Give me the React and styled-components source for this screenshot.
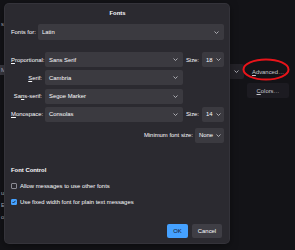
import { Fragment } from "react";
import styled, { createGlobalStyle } from "styled-components";

const GlobalStyle = createGlobalStyle`
  html, body {
    margin: 0;
    padding: 0;
    background: #131317;
  }
  body {
    font-family: "Liberation Sans", Arial, sans-serif;
    font-size: 5.9px;
    color: #fbfbfe;
  }
`;

const Page = styled.div`
  position: relative;
  display: flex;
  width: 295px;
  height: 250px;
  overflow: hidden;
  background: #131317;
`;

const Sidebar = styled.div`
  width: 5px;
  flex: none;
  overflow: hidden;
  display: flex;
  flex-direction: column;
  color: #b8b8c0;
  white-space: nowrap;
`;

const SideItem = styled.div`
  height: 10px;
  line-height: 10px;
  margin-top: ${(props) => props.top}px;
  background: ${(props) => (props.selected ? "#3a3940" : "transparent")};
  padding-left: 1px;
`;

const Main = styled.div`
  flex: 1;
  display: flex;
  justify-content: flex-end;
  align-items: flex-start;
  gap: 3px;
  padding: 64px 6px 0 0;
`;

const BackSelect = styled.div`
  width: 90px;
  height: 15px;
  border-radius: 2px;
  background: #232228;
  display: flex;
  align-items: center;
  justify-content: flex-end;
  padding-right: 5px;
  box-sizing: border-box;
`;

const ButtonCol = styled.div`
  display: flex;
  flex-direction: column;
  gap: 4px;
`;

const BackButton = styled.div`
  width: 42px;
  height: 15px;
  border-radius: 2px;
  background: ${(props) => (props.plain ? "transparent" : "#1c1b21")};
  color: #c9c9d0;
  display: flex;
  align-items: center;
  justify-content: center;
`;

const Ring = styled.svg`
  position: absolute;
  left: 242px;
  top: 58px;
`;

const Dialog = styled.div`
  position: absolute;
  left: 5px;
  top: 4px;
  width: 224px;
  height: 239px;
  box-sizing: border-box;
  padding: 0 5px 5px 6px;
  background: #2b2a30;
  border-radius: 4px;
  box-shadow: 0 0 0 1px #34333a, 0 2px 8px rgba(0, 0, 0, 0.5);
  display: flex;
  flex-direction: column;
`;

const Title = styled.div`
  height: 18px;
  line-height: 18px;
  text-align: center;
  font-weight: bold;
`;

const FontsForRow = styled.div`
  display: flex;
  align-items: center;
  gap: 2px;
  margin-top: 2px;
`;

const Label = styled.span`
  white-space: nowrap;
  text-align: ${(props) => (props.right ? "right" : "left")};
`;

const Select = styled.div`
  flex: ${(props) => (props.grow ? 1 : "none")};
  width: ${(props) => (props.w ? `${props.w}px` : "auto")};
  height: ${(props) => props.h || 15}px;
  border-radius: 2px;
  background: #3b3a40;
  display: flex;
  align-items: center;
  justify-content: space-between;
  padding: 0 ${(props) => (props.small ? 3 : 5)}px 0 4px;
  box-sizing: border-box;
  white-space: nowrap;
  grid-column: ${(props) => props.col || "auto"};
`;

const FontGrid = styled.div`
  display: grid;
  grid-template-columns: 31px 1fr auto 22px;
  grid-auto-rows: 15px;
  column-gap: 3px;
  row-gap: 3.3px;
  align-items: center;
  margin-top: 12px;
`;

const MinRow = styled.div`
  display: flex;
  justify-content: flex-end;
  align-items: center;
  gap: 2px;
  margin-top: 6px;
`;

const Heading = styled.div`
  margin-top: 23px;
  height: 8px;
  line-height: 8px;
  font-weight: bold;
`;

const CheckRow = styled.div`
  display: flex;
  align-items: center;
  gap: 3px;
  height: 8px;
  margin-top: 8px;
`;

const Box = styled.div`
  width: 6px;
  height: 6px;
  box-sizing: border-box;
  border-radius: 1px;
  border: 1px solid ${(props) => (props.checked ? "#45a1ff" : "#8a8a93")};
  background: ${(props) => (props.checked ? "#45a1ff" : "#2b2a30")};
  display: flex;
  align-items: center;
  justify-content: center;
`;

const Footer = styled.div`
  margin-top: auto;
  display: flex;
  justify-content: flex-end;
  gap: 4px;
  padding-right: 2px;
`;

const Button = styled.div`
  width: ${(props) => props.w}px;
  height: 14px;
  border-radius: 2px;
  display: flex;
  align-items: center;
  justify-content: center;
  background: ${(props) => (props.primary ? "#45a1ff" : "#3f3e45")};
  color: ${(props) => (props.primary ? "#15141a" : "#fbfbfe")};
`;

const U = styled.u`
  text-decoration-thickness: 0.5px;
  text-underline-offset: 1px;
`;

const Chevron = () => (
  <svg width="5" height="3" viewBox="0 0 5 3">
    <polyline points="0.5,0.5 2.5,2.5 4.5,0.5" fill="none" stroke="#c8c8ce" strokeWidth="0.8" />
  </svg>
);

const Check = () => (
  <svg width="4" height="4" viewBox="0 0 4 4">
    <polyline points="0.5,2 1.5,3 3.5,0.8" fill="none" stroke="#15141a" strokeWidth="0.8" />
  </svg>
);

const fontRows = [
  { key: "P", rest: "roportional:", value: "Sans Serif", size: "18" },
  { key: "S", rest: "erif:", value: "Cambria" },
  { pre: "Sa", key: "n", rest: "s-serif:", value: "Segoe Marker" },
  { key: "M", rest: "onospace:", value: "Consolas", size: "14" },
];

const App = () => (
  <>
    <GlobalStyle />
    <Page>
      <Sidebar>
        <SideItem top={19}>s</SideItem>
        <SideItem top={36} selected>M</SideItem>
        <SideItem top={113}>u</SideItem>
        <SideItem top={2}>E</SideItem>
        <SideItem top={2}>o</SideItem>
      </Sidebar>
      <Main>
        <BackSelect>
          <Chevron />
        </BackSelect>
        <ButtonCol>
          <BackButton plain>
            <span>
              <U>A</U>dvanced…
            </span>
          </BackButton>
          <BackButton>
            <span>
              <U>C</U>olors…
            </span>
          </BackButton>
        </ButtonCol>
      </Main>
      <Ring width="50" height="24" viewBox="0 0 50 24">
        <ellipse cx="24" cy="11.5" rx="22.5" ry="10" fill="none" stroke="#e8141a" strokeWidth="2" />
      </Ring>
      <Dialog>
        <Title>Fonts</Title>
        <FontsForRow>
          <Label>Fonts for:</Label>
          <Select grow h={16}>
            <span>Latin</span>
            <Chevron />
          </Select>
        </FontsForRow>
        <FontGrid>
          {fontRows.map((row) => (
            <Fragment key={row.value}>
              <Label right>
                {row.pre}
                <U>{row.key}</U>
                {row.rest}
              </Label>
              <Select col="2">
                <span>{row.value}</span>
                <Chevron />
              </Select>
              {row.size ? (
                <>
                  <Label>Size:</Label>
                  <Select small>
                    <span>{row.size}</span>
                    <Chevron />
                  </Select>
                </>
              ) : (
                <>
                  <span />
                  <span />
                </>
              )}
            </Fragment>
          ))}
        </FontGrid>
        <MinRow>
          <Label>Minimum font size:</Label>
          <Select small w={29}>
            <span>None</span>
            <Chevron />
          </Select>
        </MinRow>
        <Heading>Font Control</Heading>
        <CheckRow>
          <Box />
          <Label>Allow messages to use other fonts</Label>
        </CheckRow>
        <CheckRow>
          <Box checked>
            <Check />
          </Box>
          <Label>Use fixed width font for plain text messages</Label>
        </CheckRow>
        <Footer>
          <Button primary w={21}>OK</Button>
          <Button w={30}>Cancel</Button>
        </Footer>
      </Dialog>
    </Page>
  </>
);

export default App;
